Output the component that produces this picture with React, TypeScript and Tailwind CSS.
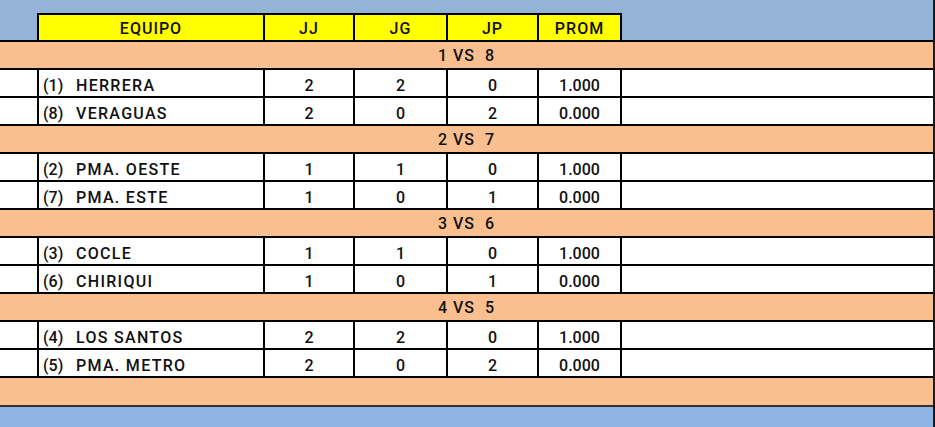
import React from 'react';

type Team = { seed: string; name: string; jj: number; jg: number; jp: number; prom: string };

const groups: { title: string; teams: Team[] }[] = [
  {
    title: '1 VS  8',
    teams: [
      { seed: '(1)', name: 'HERRERA', jj: 2, jg: 2, jp: 0, prom: '1.000' },
      { seed: '(8)', name: 'VERAGUAS', jj: 2, jg: 0, jp: 2, prom: '0.000' },
    ],
  },
  {
    title: '2 VS  7',
    teams: [
      { seed: '(2)', name: 'PMA. OESTE', jj: 1, jg: 1, jp: 0, prom: '1.000' },
      { seed: '(7)', name: 'PMA. ESTE', jj: 1, jg: 0, jp: 1, prom: '0.000' },
    ],
  },
  {
    title: '3 VS  6',
    teams: [
      { seed: '(3)', name: 'COCLE', jj: 1, jg: 1, jp: 0, prom: '1.000' },
      { seed: '(6)', name: 'CHIRIQUI', jj: 1, jg: 0, jp: 1, prom: '0.000' },
    ],
  },
  {
    title: '4 VS  5',
    teams: [
      { seed: '(4)', name: 'LOS SANTOS', jj: 2, jg: 2, jp: 0, prom: '1.000' },
      { seed: '(5)', name: 'PMA. METRO', jj: 2, jg: 0, jp: 2, prom: '0.000' },
    ],
  },
];

const cols = 'grid grid-cols-[37px_226px_90px_93px_91px_83px_1fr]';
const head = 'bg-[#ffff00] border-t-2 border-l-2 border-black flex items-center justify-center pt-[3px] tracking-[1px]';
const num = 'border-l-2 border-black flex items-center justify-center pt-[6px]';

const App = () => {
  return (
    <div
      className="w-[935px] h-[427px] overflow-hidden border-r-2 border-[#1a1a1a] text-[16px] leading-none text-[#111] bg-[#8db4e2]"
      style={{ fontFamily: 'Roboto, "Liberation Sans", sans-serif' }}
    >
      {/* top band */}
      <div className="h-[13px] bg-[#95b3d7]" />

      {/* header */}
      <div className={`${cols} h-[29px] bg-[#95b3d7] border-b-2 border-black font-medium`}>
        <div />
        <div className={head}>EQUIPO</div>
        <div className={head}>JJ</div>
        <div className={head}>JG</div>
        <div className={head}>JP</div>
        <div className={head}>PROM</div>
        <div className="border-l-2 border-black" />
      </div>

      {groups.map((g) => (
        <React.Fragment key={g.title}>
          <div className="h-[28px] bg-[#fabf8f] border-b-2 border-black flex items-center justify-center pt-[1px] font-medium whitespace-pre tracking-[1px]">
            {g.title}
          </div>
          {g.teams.map((t) => (
            <div key={t.name} className={`${cols} h-[28px] bg-white border-b-2 border-black font-medium`}>
              <div />
              <div className="border-l-2 border-black flex items-center pl-[4px] pt-[6px]">
                <span className="w-[33px]">{t.seed}</span>
                <span className="tracking-[1.3px]">{t.name}</span>
              </div>
              <div className={num}>{t.jj}</div>
              <div className={num}>{t.jg}</div>
              <div className={num}>{t.jp}</div>
              <div className={num}>{t.prom}</div>
              <div className="border-l-2 border-black" />
            </div>
          ))}
        </React.Fragment>
      ))}

      {/* empty orange row */}
      <div className="h-[29px] bg-[#fabf8f] border-b-2 border-[#333]" />
    </div>
  );
};

export default App;
